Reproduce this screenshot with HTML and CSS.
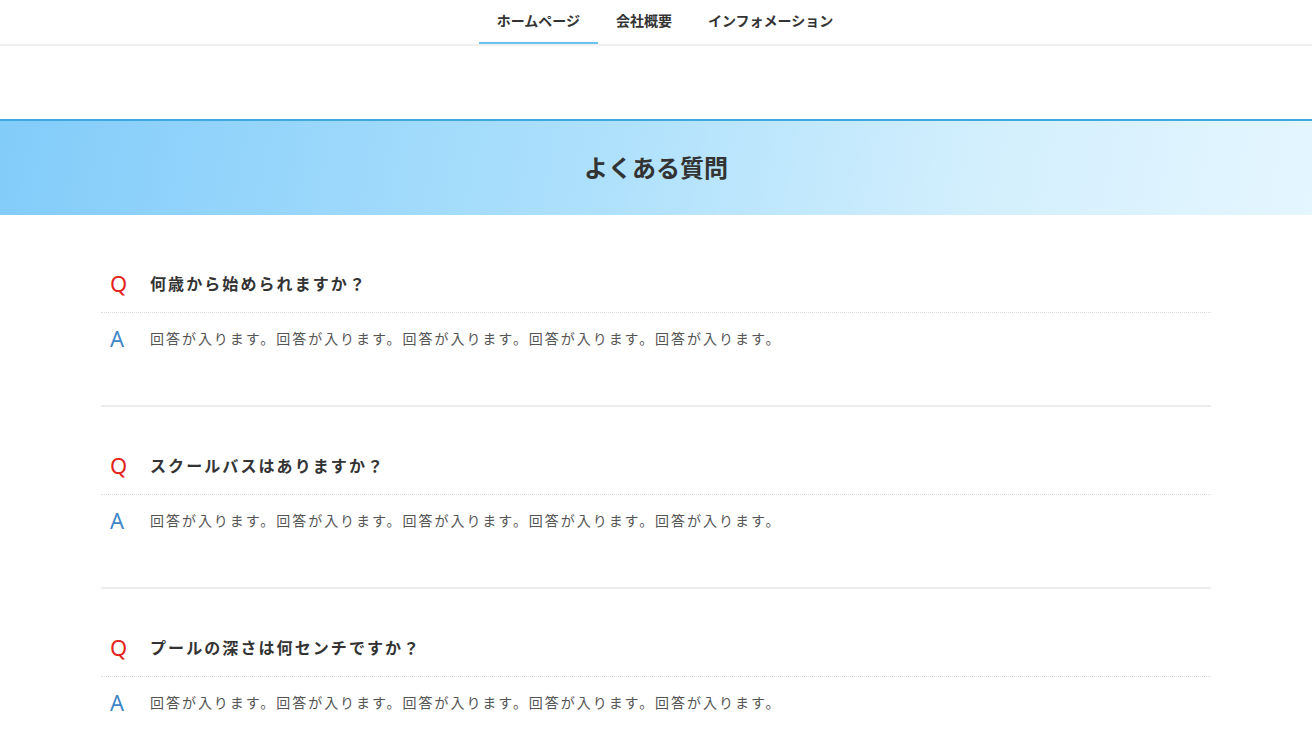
FILE: index.html
```html
<!DOCTYPE html>
<html lang="ja">
<head>
    <meta charset="UTF-8">
    <meta name="viewport" content="width=device-width, initial-scale=1.0">
    <title>よくある質問</title>
    <link rel="stylesheet" href="styles.css">
</head>
<body>
    <header class="site-header">
        <nav class="global-nav">
            <ul>
                <li class="current"><a href="#">ホームページ</a></li>
                <li><a href="#">会社概要</a></li>
                <li><a href="#">インフォメーション</a></li>
            </ul>
        </nav>
    </header>

    <div class="page-title">
        <h1>よくある質問</h1>
    </div>

    <main class="container">
        <dl class="faq">
            <div class="faq-item">
                <dt><span class="mark q">Q</span>何歳から始められますか？</dt>
                <dd><span class="mark a">A</span>回答が入ります。回答が入ります。回答が入ります。回答が入ります。回答が入ります。</dd>
            </div>
            <div class="faq-item">
                <dt><span class="mark q">Q</span>スクールバスはありますか？</dt>
                <dd><span class="mark a">A</span>回答が入ります。回答が入ります。回答が入ります。回答が入ります。回答が入ります。</dd>
            </div>
            <div class="faq-item">
                <dt><span class="mark q">Q</span>プールの深さは何センチですか？</dt>
                <dd><span class="mark a">A</span>回答が入ります。回答が入ります。回答が入ります。回答が入ります。回答が入ります。</dd>
            </div>
        </dl>
    </main>
</body>
</html>
```

FILE: styles.css
```css
body {
    font-family: "Noto Sans CJK JP", "Noto Sans", sans-serif;
    color: #333;
    background-color: #fff;
    margin: 0;
    padding: 0;
}
a {
    color: inherit;
    text-decoration: none;
}
.site-header {
    border-bottom: 2px solid #f0f0f0;
    margin-bottom: 73px;
}
.global-nav ul {
    display: flex;
    justify-content: center;
    list-style: none;
    margin: 0;
    padding: 0 0 0 18px;
}
.global-nav li a {
    display: block;
    height: 44px;
    line-height: 40px;
    padding: 0 18px;
    font-size: 14px;
    font-weight: bold;
    box-sizing: border-box;
}
.global-nav li.current a {
    border-bottom: 2px solid #6cc1ee;
}
.page-title {
    border-top: 2px solid #3ea9de;
    height: 96px;
    box-sizing: border-box;
    padding-bottom: 4px;
    display: flex;
    align-items: center;
    justify-content: center;
    background: linear-gradient(100deg, #82ccfa 0%, #ade0fc 45%, #d3effd 75%, #e4f6ff 100%);
}
.page-title h1 {
    margin: 0;
    font-size: 24px;
    font-weight: bold;
    color: #333;
}
.container {
    max-width: 1110px;
    margin: 0 auto;
    padding-top: 10px;
}
.faq {
    margin: 0;
}
.faq-item {
    padding: 32px 0 38px;
    border-bottom: 2px solid #ececec;
}
.faq dt {
    display: flex;
    align-items: center;
    height: 56px;
    box-sizing: border-box;
    padding-bottom: 4px;
    border-bottom: 1px dotted #dcdcdc;
    font-size: 16px;
    font-weight: bold;
    letter-spacing: 0.13em;
}
.faq dd {
    display: flex;
    align-items: center;
    height: 54px;
    box-sizing: border-box;
    padding-bottom: 4px;
    margin: 0;
    font-size: 14px;
    color: #555;
    letter-spacing: 0.14em;
}
.mark {
    width: 49px;
    padding-left: 9px;
    box-sizing: border-box;
    font-family: "Noto Sans", sans-serif;
    font-size: 22px;
    font-weight: normal;
    letter-spacing: 0;
}
.mark.q {
    color: #e2231a;
}
.mark.a {
    color: #3f86c8;
}
```
